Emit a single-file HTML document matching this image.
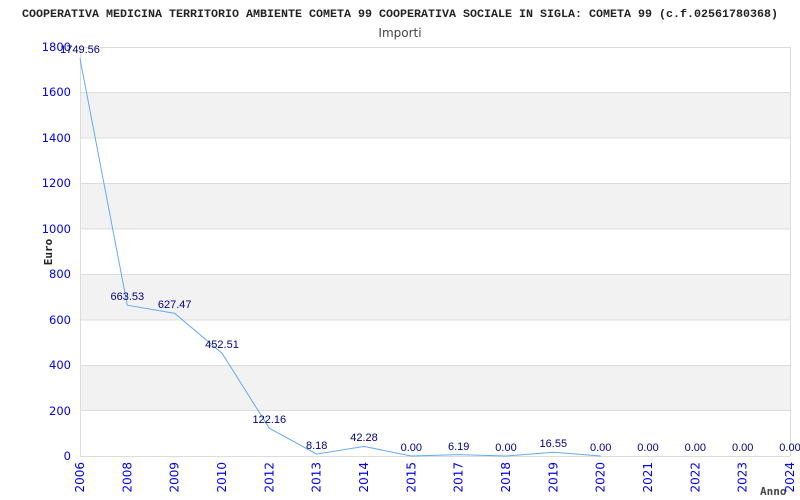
<!DOCTYPE html>
<html><head><meta charset="utf-8"><style>body{margin:0;background:#fff}</style></head><body>
<svg width="800" height="500" xmlns="http://www.w3.org/2000/svg" style="display:block">
<rect width="800" height="500" fill="#fff"/>
<text x="22" y="17" textLength="756" lengthAdjust="spacingAndGlyphs" font-family="Liberation Mono, monospace" font-weight="bold" font-size="11" fill="#222">COOPERATIVA MEDICINA TERRITORIO AMBIENTE COMETA 99 COOPERATIVA SOCIALE IN SIGLA: COMETA 99 (c.f.02561780368)</text>
<text x="400" y="37" text-anchor="middle" font-family="DejaVu Sans, sans-serif" font-size="12" fill="#444">Importi</text>
<g fill="#f2f2f2">
<rect x="80" y="92.4" width="710" height="45.4"/>
<rect x="80" y="183.3" width="710" height="45.4"/>
<rect x="80" y="274.1" width="710" height="45.4"/>
<rect x="80" y="365" width="710" height="45.4"/>
</g>
<g stroke="#dcdcdc" stroke-width="1">
<line x1="80" y1="47.5" x2="790" y2="47.5"/>
<line x1="80" y1="92.5" x2="790" y2="92.5"/>
<line x1="80" y1="138" x2="790" y2="138"/>
<line x1="80" y1="183.5" x2="790" y2="183.5"/>
<line x1="80" y1="229" x2="790" y2="229"/>
<line x1="80" y1="274.5" x2="790" y2="274.5"/>
<line x1="80" y1="320" x2="790" y2="320"/>
<line x1="80" y1="365.5" x2="790" y2="365.5"/>
<line x1="80" y1="410.5" x2="790" y2="410.5"/>
<line x1="80" y1="456.5" x2="790" y2="456.5"/>
<line x1="80.5" y1="47" x2="80.5" y2="456"/>
<line x1="790.5" y1="47" x2="790.5" y2="456"/>
</g>
<g font-family="DejaVu Sans, sans-serif" font-size="11.5" fill="#0000ee" text-anchor="end">
<text x="71" y="51">1800</text><text x="71" y="96">1600</text><text x="71" y="142">1400</text>
<text x="71" y="187">1200</text><text x="71" y="233">1000</text><text x="71" y="278">800</text>
<text x="71" y="324">600</text><text x="71" y="369">400</text><text x="71" y="415">200</text><text x="71" y="460">0</text>
</g>
<text transform="translate(52,252) rotate(-90)" text-anchor="middle" font-family="DejaVu Sans Mono, monospace" font-weight="bold" font-size="11" fill="#222">Euro</text>
<text x="760" y="495" font-family="DejaVu Sans Mono, monospace" font-weight="bold" font-size="11" fill="#444">Anno</text>
<g font-family="DejaVu Sans, sans-serif" font-size="12" fill="#0000ee" text-anchor="end">
<text transform="translate(84,462) rotate(-90)">2006</text>
<text transform="translate(131.3,462) rotate(-90)">2008</text>
<text transform="translate(178.7,462) rotate(-90)">2009</text>
<text transform="translate(226,462) rotate(-90)">2010</text>
<text transform="translate(273.3,462) rotate(-90)">2012</text>
<text transform="translate(320.7,462) rotate(-90)">2013</text>
<text transform="translate(368,462) rotate(-90)">2014</text>
<text transform="translate(415.3,462) rotate(-90)">2015</text>
<text transform="translate(462.7,462) rotate(-90)">2017</text>
<text transform="translate(510,462) rotate(-90)">2018</text>
<text transform="translate(557.3,462) rotate(-90)">2019</text>
<text transform="translate(604.7,462) rotate(-90)">2020</text>
<text transform="translate(652,462) rotate(-90)">2021</text>
<text transform="translate(699.3,462) rotate(-90)">2022</text>
<text transform="translate(746.7,462) rotate(-90)">2023</text>
<text transform="translate(794,462) rotate(-90)">2024</text>
</g>
<polyline fill="none" stroke="#66aaee" stroke-width="1" points="80,58.5 127.3,305.2 174.7,313.4 222,353.2 269.3,428.2 316.7,454.1 364,446.4 411.3,456 458.7,454.6 506,456 553.3,452.2 600.7,456"/>
<g font-family="Liberation Sans, Arial, sans-serif" font-size="11" fill="#000080" text-anchor="middle">
<text x="80" y="53">1749.56</text>
<text x="127.3" y="300">663.53</text>
<text x="174.7" y="308">627.47</text>
<text x="222" y="348">452.51</text>
<text x="269.3" y="423">122.16</text>
<text x="316.7" y="449">8.18</text>
<text x="364" y="441">42.28</text>
<text x="411.3" y="451">0.00</text>
<text x="458.7" y="450">6.19</text>
<text x="506" y="451">0.00</text>
<text x="553.3" y="447">16.55</text>
<text x="600.7" y="451">0.00</text>
<text x="648" y="451">0.00</text>
<text x="695.3" y="451">0.00</text>
<text x="742.7" y="451">0.00</text>
<text x="790" y="451">0.00</text>
</g>
</svg>
</body></html>
